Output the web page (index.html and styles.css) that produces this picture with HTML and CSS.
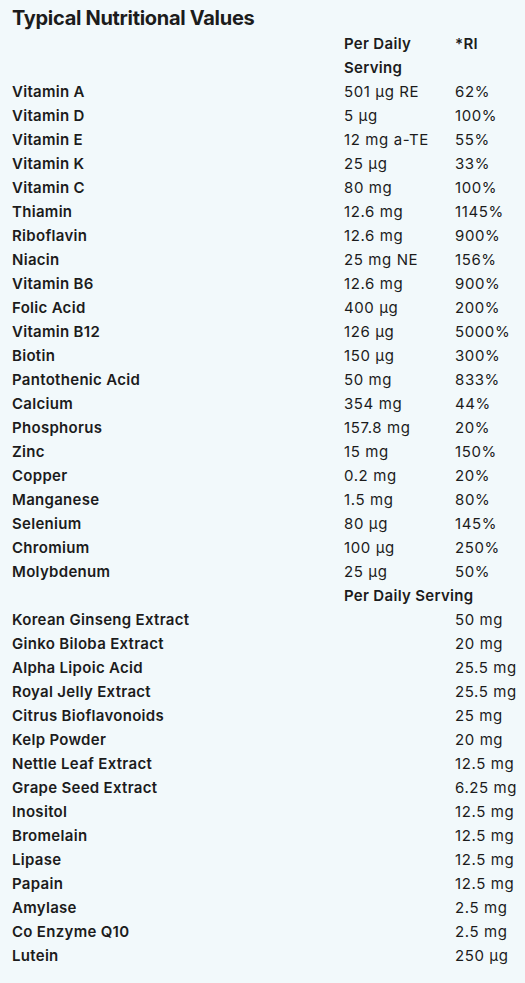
FILE: index.html
```html
<!DOCTYPE html>
<html>
<head>
<meta charset="utf-8">
<link rel="stylesheet" href="styles.css">
</head>
<body>
<div class="panel">
  <h2 class="title">Typical Nutritional Values</h2>
  <div class="grid">
    <div class="th"></div><div class="th">Per Daily Serving</div><div class="th">*RI</div>
    <div class="n">Vitamin A</div><div class="v">501 µg RE</div><div class="v">62%</div>
    <div class="n">Vitamin D</div><div class="v">5 µg</div><div class="v">100%</div>
    <div class="n">Vitamin E</div><div class="v">12 mg a-TE</div><div class="v">55%</div>
    <div class="n">Vitamin K</div><div class="v">25 µg</div><div class="v">33%</div>
    <div class="n">Vitamin C</div><div class="v">80 mg</div><div class="v">100%</div>
    <div class="n">Thiamin</div><div class="v">12.6 mg</div><div class="v">1145%</div>
    <div class="n">Riboflavin</div><div class="v">12.6 mg</div><div class="v">900%</div>
    <div class="n">Niacin</div><div class="v">25 mg NE</div><div class="v">156%</div>
    <div class="n">Vitamin B6</div><div class="v">12.6 mg</div><div class="v">900%</div>
    <div class="n">Folic Acid</div><div class="v">400 µg</div><div class="v">200%</div>
    <div class="n">Vitamin B12</div><div class="v">126 µg</div><div class="v">5000%</div>
    <div class="n">Biotin</div><div class="v">150 µg</div><div class="v">300%</div>
    <div class="n">Pantothenic Acid</div><div class="v">50 mg</div><div class="v">833%</div>
    <div class="n">Calcium</div><div class="v">354 mg</div><div class="v">44%</div>
    <div class="n">Phosphorus</div><div class="v">157.8 mg</div><div class="v">20%</div>
    <div class="n">Zinc</div><div class="v">15 mg</div><div class="v">150%</div>
    <div class="n">Copper</div><div class="v">0.2 mg</div><div class="v">20%</div>
    <div class="n">Manganese</div><div class="v">1.5 mg</div><div class="v">80%</div>
    <div class="n">Selenium</div><div class="v">80 µg</div><div class="v">145%</div>
    <div class="n">Chromium</div><div class="v">100 µg</div><div class="v">250%</div>
    <div class="n">Molybdenum</div><div class="v">25 µg</div><div class="v">50%</div>

    <div class="th"></div><div class="th span2">Per Daily Serving</div>
    <div class="n">Korean Ginseng Extract</div><div class="v"></div><div class="v">50 mg</div>
    <div class="n">Ginko Biloba Extract</div><div class="v"></div><div class="v">20 mg</div>
    <div class="n">Alpha Lipoic Acid</div><div class="v"></div><div class="v">25.5 mg</div>
    <div class="n">Royal Jelly Extract</div><div class="v"></div><div class="v">25.5 mg</div>
    <div class="n">Citrus Bioflavonoids</div><div class="v"></div><div class="v">25 mg</div>
    <div class="n">Kelp Powder</div><div class="v"></div><div class="v">20 mg</div>
    <div class="n">Nettle Leaf Extract</div><div class="v"></div><div class="v">12.5 mg</div>
    <div class="n">Grape Seed Extract</div><div class="v"></div><div class="v">6.25 mg</div>
    <div class="n">Inositol</div><div class="v"></div><div class="v">12.5 mg</div>
    <div class="n">Bromelain</div><div class="v"></div><div class="v">12.5 mg</div>
    <div class="n">Lipase</div><div class="v"></div><div class="v">12.5 mg</div>
    <div class="n">Papain</div><div class="v"></div><div class="v">12.5 mg</div>
    <div class="n">Amylase</div><div class="v"></div><div class="v">2.5 mg</div>
    <div class="n">Co Enzyme Q10</div><div class="v"></div><div class="v">2.5 mg</div>
    <div class="n">Lutein</div><div class="v"></div><div class="v">250 µg</div>
  </div>
</div>
</body>
</html>
```
FILE: styles.css
```css
html, body {
  margin: 0;
  padding: 0;
  background: #f2f9fb;
}
body {
  font-family: Inter, "Liberation Sans", sans-serif;
  color: #1c1c1c;
}
.panel {
  padding: 6px 4px 20px 12px;
}
.title {
  margin: 0 0 1px 0;
  font-size: 20px;
  font-weight: 700;
  line-height: 25px;
  letter-spacing: -0.3px;
}
.grid {
  display: grid;
  grid-template-columns: 332px 111px 1fr;
}
.th, .n, .v {
  font-size: 15px;
  line-height: 24px;
}
.th, .n {
  font-weight: 600;
  letter-spacing: 0.3px;
}
.v {
  font-weight: 400;
  letter-spacing: 0.6px;
  white-space: nowrap;
}
.th {
  padding-right: 16px;
}
.span2 {
  grid-column: span 2;
}
```
